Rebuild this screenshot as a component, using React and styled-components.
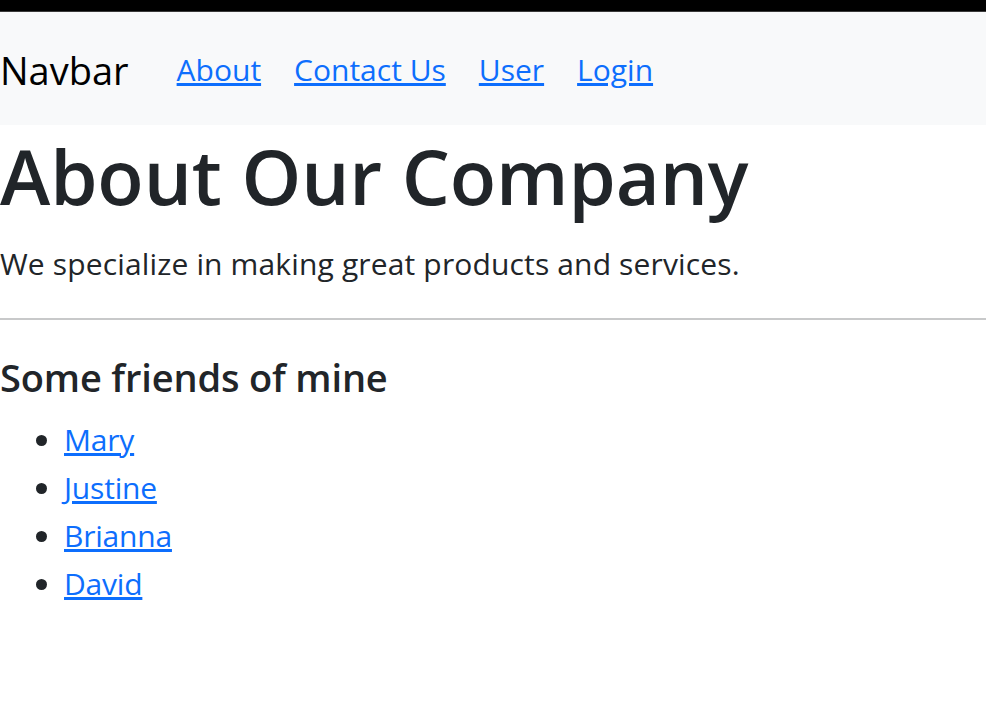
import React from "react";
import styled, { createGlobalStyle } from "styled-components";

const GlobalStyle = createGlobalStyle`
  body {
    margin: 0;
    background: #fff;
    color: #212529;
    font-family: "Open Sans", "Noto Sans", sans-serif;
  }
`;

const friends = ["Mary", "Justine", "Brianna", "David"];
const links = ["About", "Contact Us", "User", "Login"];

const App = () => {
  return (
    <>
      <GlobalStyle />
      <TopStrip />
      <Navbar>
        <Brand>Navbar</Brand>
        <NavLinks>
          {links.map((l) => (
            <NavLink key={l} href="#">
              {l}
            </NavLink>
          ))}
        </NavLinks>
      </Navbar>
      <Main>
        <Title>About Our Company</Title>
        <Lead>We specialize in making great products and services.</Lead>
        <Rule />
        <SubTitle>Some friends of mine</SubTitle>
        <FriendList>
          {friends.map((f) => (
            <li key={f}>
              <FriendLink href="#">{f}</FriendLink>
            </li>
          ))}
        </FriendList>
      </Main>
    </>
  );
};

export default App;

const TopStrip = styled.div`
  height: 12px;
  background: #000;
  border-bottom: 1px solid #3a3a3a;
  box-sizing: border-box;
`;

const Navbar = styled.nav`
  height: 113px;
  background: #f8f9fa;
  display: flex;
  align-items: center;
  padding-top: 2px;
  box-sizing: border-box;
`;

const Brand = styled.span`
  font-size: 38px;
  color: #000;
  margin-right: 48px;
`;

const NavLinks = styled.div`
  display: flex;
  gap: 33px;
`;

const NavLink = styled.a`
  font-size: 30px;
  color: #0d6efd;
  text-decoration: underline;
`;

const Main = styled.main`
  padding: 0;
`;

const Title = styled.h1`
  margin: 5px 0 0;
  font-size: 76px;
  font-weight: 600;
  line-height: 1.2;
  letter-spacing: -0.1px;
`;

const Lead = styled.p`
  margin: 20px 0 32px;
  font-size: 30px;
  line-height: 1.5;
  letter-spacing: 0.15px;
`;

const Rule = styled.hr`
  margin: 0;
  border: 0;
  border-top: 2px solid #c8c9ca;
`;

const SubTitle = styled.h4`
  margin: 35px 0 15px;
  font-size: 38px;
  font-weight: 600;
  line-height: 1.2;
  letter-spacing: -0.15px;
`;

const FriendList = styled.ul`
  margin: 0;
  padding-left: 64px;
  font-size: 30px;
  line-height: 48px;
`;

const FriendLink = styled.a`
  color: #0d6efd;
  text-decoration: underline;
  letter-spacing: -0.2px;
`;
